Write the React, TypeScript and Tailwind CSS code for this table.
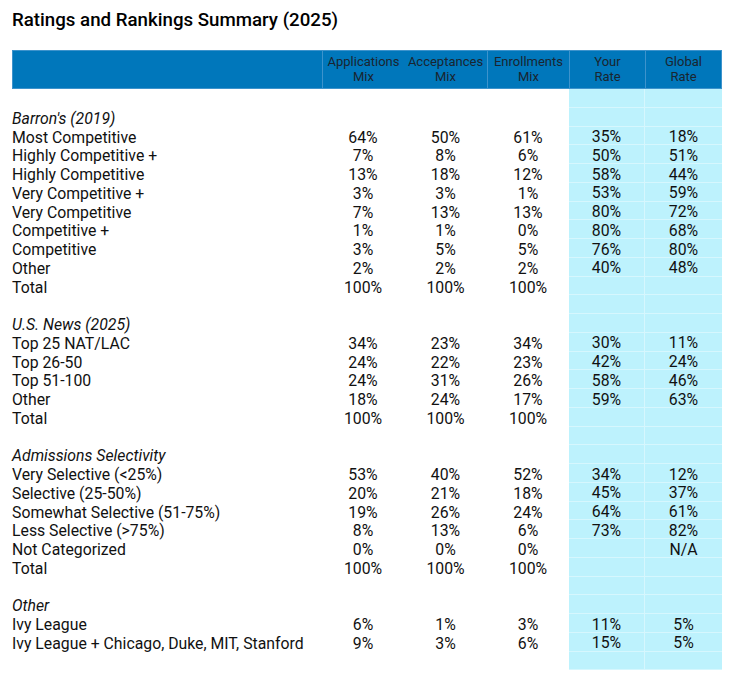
import React from "react"

type Row =
  | { kind: "blank" }
  | { kind: "section"; label: string }
  | { kind: "data"; label: string; vals: string[] }

const rows: Row[] = [
  { kind: "blank" },
  { kind: "section", label: "Barron's (2019)" },
  { kind: "data", label: "Most Competitive", vals: ["64%", "50%", "61%", "35%", "18%"] },
  { kind: "data", label: "Highly Competitive +", vals: ["7%", "8%", "6%", "50%", "51%"] },
  { kind: "data", label: "Highly Competitive", vals: ["13%", "18%", "12%", "58%", "44%"] },
  { kind: "data", label: "Very Competitive +", vals: ["3%", "3%", "1%", "53%", "59%"] },
  { kind: "data", label: "Very Competitive", vals: ["7%", "13%", "13%", "80%", "72%"] },
  { kind: "data", label: "Competitive +", vals: ["1%", "1%", "0%", "80%", "68%"] },
  { kind: "data", label: "Competitive", vals: ["3%", "5%", "5%", "76%", "80%"] },
  { kind: "data", label: "Other", vals: ["2%", "2%", "2%", "40%", "48%"] },
  { kind: "data", label: "Total", vals: ["100%", "100%", "100%", "", ""] },
  { kind: "blank" },
  { kind: "section", label: "U.S. News (2025)" },
  { kind: "data", label: "Top 25 NAT/LAC", vals: ["34%", "23%", "34%", "30%", "11%"] },
  { kind: "data", label: "Top 26-50", vals: ["24%", "22%", "23%", "42%", "24%"] },
  { kind: "data", label: "Top 51-100", vals: ["24%", "31%", "26%", "58%", "46%"] },
  { kind: "data", label: "Other", vals: ["18%", "24%", "17%", "59%", "63%"] },
  { kind: "data", label: "Total", vals: ["100%", "100%", "100%", "", ""] },
  { kind: "blank" },
  { kind: "section", label: "Admissions Selectivity" },
  { kind: "data", label: "Very Selective (<25%)", vals: ["53%", "40%", "52%", "34%", "12%"] },
  { kind: "data", label: "Selective (25-50%)", vals: ["20%", "21%", "18%", "45%", "37%"] },
  { kind: "data", label: "Somewhat Selective (51-75%)", vals: ["19%", "26%", "24%", "64%", "61%"] },
  { kind: "data", label: "Less Selective (>75%)", vals: ["8%", "13%", "6%", "73%", "82%"] },
  { kind: "data", label: "Not Categorized", vals: ["0%", "0%", "0%", "", "N/A"] },
  { kind: "data", label: "Total", vals: ["100%", "100%", "100%", "", ""] },
  { kind: "blank" },
  { kind: "section", label: "Other" },
  { kind: "data", label: "Ivy League", vals: ["6%", "1%", "3%", "11%", "5%"] },
  { kind: "data", label: "Ivy League + Chicago, Duke, MIT, Stanford", vals: ["9%", "3%", "6%", "15%", "5%"] },
  { kind: "blank" },
]

const headers = [
  ["Applications", "Mix"],
  ["Acceptances", "Mix"],
  ["Enrollments", "Mix"],
  ["Your", "Rate"],
  ["Global", "Rate"],
]

function Cell({ text, idx }: { text: string; idx: number }) {
  if (idx === 3) {
    return (
      <div className="h-[18.75px] pt-[3px] flex items-center justify-center bg-[#bdf2fd] border-b border-r border-[#d6f7fe]">
        {text}
      </div>
    )
  }
  if (idx === 4) {
    return (
      <div className="h-[18.75px] pt-[3px] flex items-center justify-center bg-[#bdf2fd] border-b border-[#d6f7fe]">
        {text}
      </div>
    )
  }
  return <div className="h-[18.75px] pt-[3px] flex items-center justify-center">{text}</div>
}

export default function App() {
  return (
    <div className="bg-white min-h-[685px] w-[737px] px-3 pt-[7px] text-[#111] font-['Roboto',sans-serif]">
      <h1 className="text-[18.7px] font-medium leading-[26px] text-black">
        Ratings and Rankings Summary (2025)
      </h1>
      <div className="mt-[17px] grid grid-cols-[310px_82px_83px_82px_76px_77px] text-[15.8px]">
        <div className="h-[39px] bg-[#0077bb] border-t border-l border-b border-[#3d93cc]" />
        {headers.map((h, i) => (
          <div
            key={i}
            className={
              "h-[39px] bg-[#0077bb] border-t border-b border-[#3d93cc] flex flex-col items-center justify-center text-[13px] leading-[14.5px] text-[#1a2530] " +
              (i === 1 ? "" : "border-l ") +
              (i === 4 ? "border-r" : "")
            }
          >
            <span>{h[0]}</span>
            <span>{h[1]}</span>
          </div>
        ))}
        {rows.map((r, ri) => (
          <React.Fragment key={ri}>
            <div className={"h-[18.75px] pt-[3px] flex items-center whitespace-nowrap " + (r.kind === "section" ? "italic" : "")}>
              {r.kind === "blank" ? "" : r.label}
            </div>
            {[0, 1, 2, 3, 4].map((ci) => (
              <Cell key={ci} idx={ci} text={r.kind === "data" ? r.vals[ci] : ""} />
            ))}
          </React.Fragment>
        ))}
      </div>
    </div>
  )
}
